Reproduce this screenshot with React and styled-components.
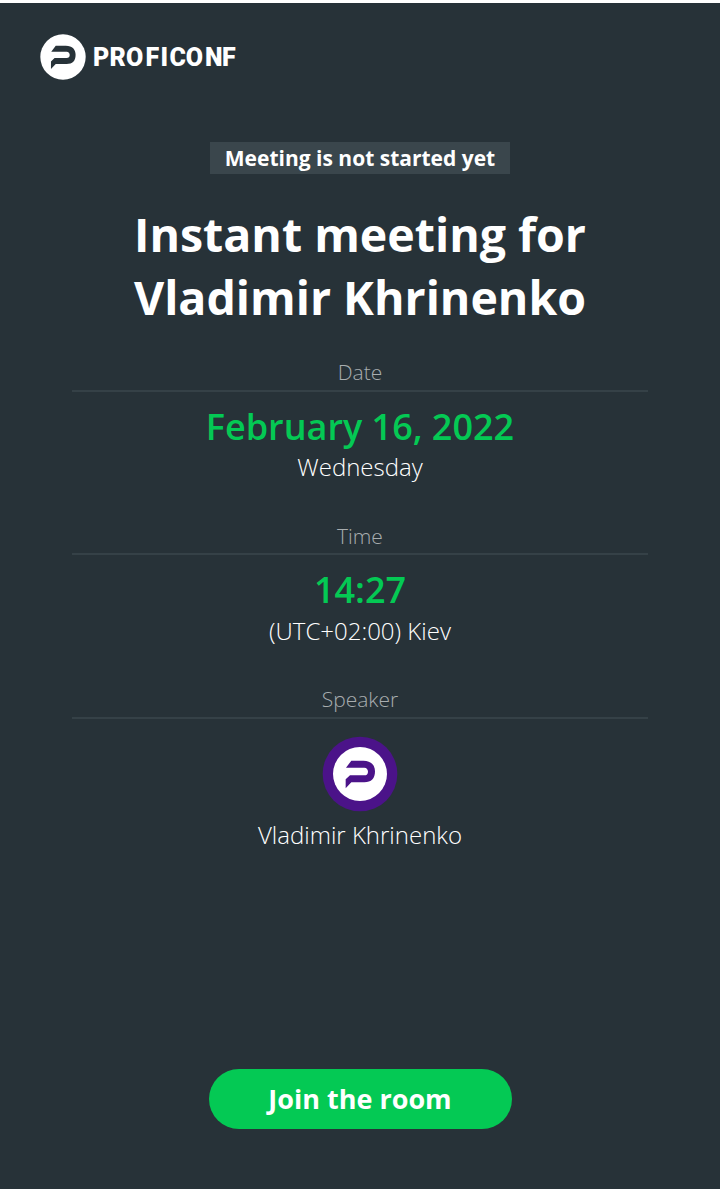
import React from 'react'
import styled, { createGlobalStyle } from 'styled-components'

const GlobalStyle = createGlobalStyle`
  * {
    box-sizing: border-box;
  }

  body {
    margin: 0;
    background: #ffffff;
    font-family: 'Open Sans', sans-serif;
  }
`

const Page = styled.div`
  display: flex;
  flex-direction: column;
  align-items: center;
  height: 1190px;
  padding-bottom: 60px;
  border-top: 3px solid #ffffff;
  border-bottom: 1px solid #ffffff;
  background: #273238;
  color: #ffffff;
`

const Header = styled.header`
  width: 100%;
  height: 139px;
  padding: 31px 40px 0;
`

const Logo = styled.svg`
  display: block;
  font-family: Roboto, sans-serif;
  font-size: 25px;
  font-weight: 900;
`

const Status = styled.div`
  width: 300px;
  height: 32px;
  background: #3a464c;
  font-size: 21px;
  font-weight: 700;
  line-height: 32px;
  text-align: center;
`

const Title = styled.h1`
  width: 576px;
  margin: 29px 0 0;
  font-size: 46.5px;
  font-weight: 700;
  line-height: 63px;
  text-align: center;
`

const Details = styled.dl`
  width: 576px;
  margin: 28px 0 0;
  text-align: center;
`

const Detail = styled.div`
  height: 163.5px;
`

const Label = styled.dt`
  height: 34.9px;
  border-bottom: 2px solid #354147;
  color: #a8adaf;
  font-size: 21px;
  font-weight: 300;
  line-height: 30px;
`

const Value = styled.dd`
  margin: 10px 0 0.2px;
  color: #04c954;
  font-size: 36px;
  font-weight: 600;
  line-height: 49px;
`

const Note = styled.dd`
  margin: 0;
  font-size: 24px;
  font-weight: 300;
  line-height: 32px;
`

const Avatar = styled.svg`
  display: block;
  margin: 17.1px auto 7px;
`

const JoinButton = styled.button`
  width: 303px;
  height: 60px;
  margin-top: auto;
  padding: 0 0 1px;
  border: 0;
  border-radius: 30px;
  background: #04c954;
  color: #ffffff;
  font-family: inherit;
  font-size: 27px;
  font-weight: 700;
  line-height: 59px;
`

// Brand sign, drawn around 0,0 with a radius of 81
const Sign = ({ color }) => (
  <>
    <circle r="81" fill="#ffffff" />
    <path
      fill={color}
      d="M-26-40H10C34-40 45-26 45-8C45 14 34 25 13 25H-26L-43 43V16L-30 4H13C20 4 24 0 24-7C24-14 20-19 13-19H-42Z"
    />
  </>
)

const IndexPage = () => (
  <>
    <GlobalStyle />
    <Page>
      <Header>
        <Logo width="200" height="46" viewBox="0 0 200 46" fill="#ffffff">
          <g transform="translate(23 23) scale(.28)">
            <Sign color="#273238" />
          </g>
          <text x="53 69.5 86 105.5 120.5 129.5 145.8 165 182" y="32">PROFICONF</text>
        </Logo>
      </Header>
      <Status>Meeting is not started yet</Status>
      <Title>Instant meeting for Vladimir Khrinenko</Title>
      <Details>
        <Detail>
          <Label>Date</Label>
          <Value>February 16, 2022</Value>
          <Note>Wednesday</Note>
        </Detail>
        <Detail>
          <Label>Time</Label>
          <Value>14:27</Value>
          <Note>(UTC+02:00) Kiev</Note>
        </Detail>
        <Detail>
          <Label>Speaker</Label>
          <Avatar width="76" height="76" viewBox="-114 -114 228 228">
            <circle r="112" fill="#4b1389" />
            <Sign color="#4b1389" />
          </Avatar>
          <Note>Vladimir Khrinenko</Note>
        </Detail>
      </Details>
      <JoinButton>Join the room</JoinButton>
    </Page>
  </>
)

export default IndexPage
